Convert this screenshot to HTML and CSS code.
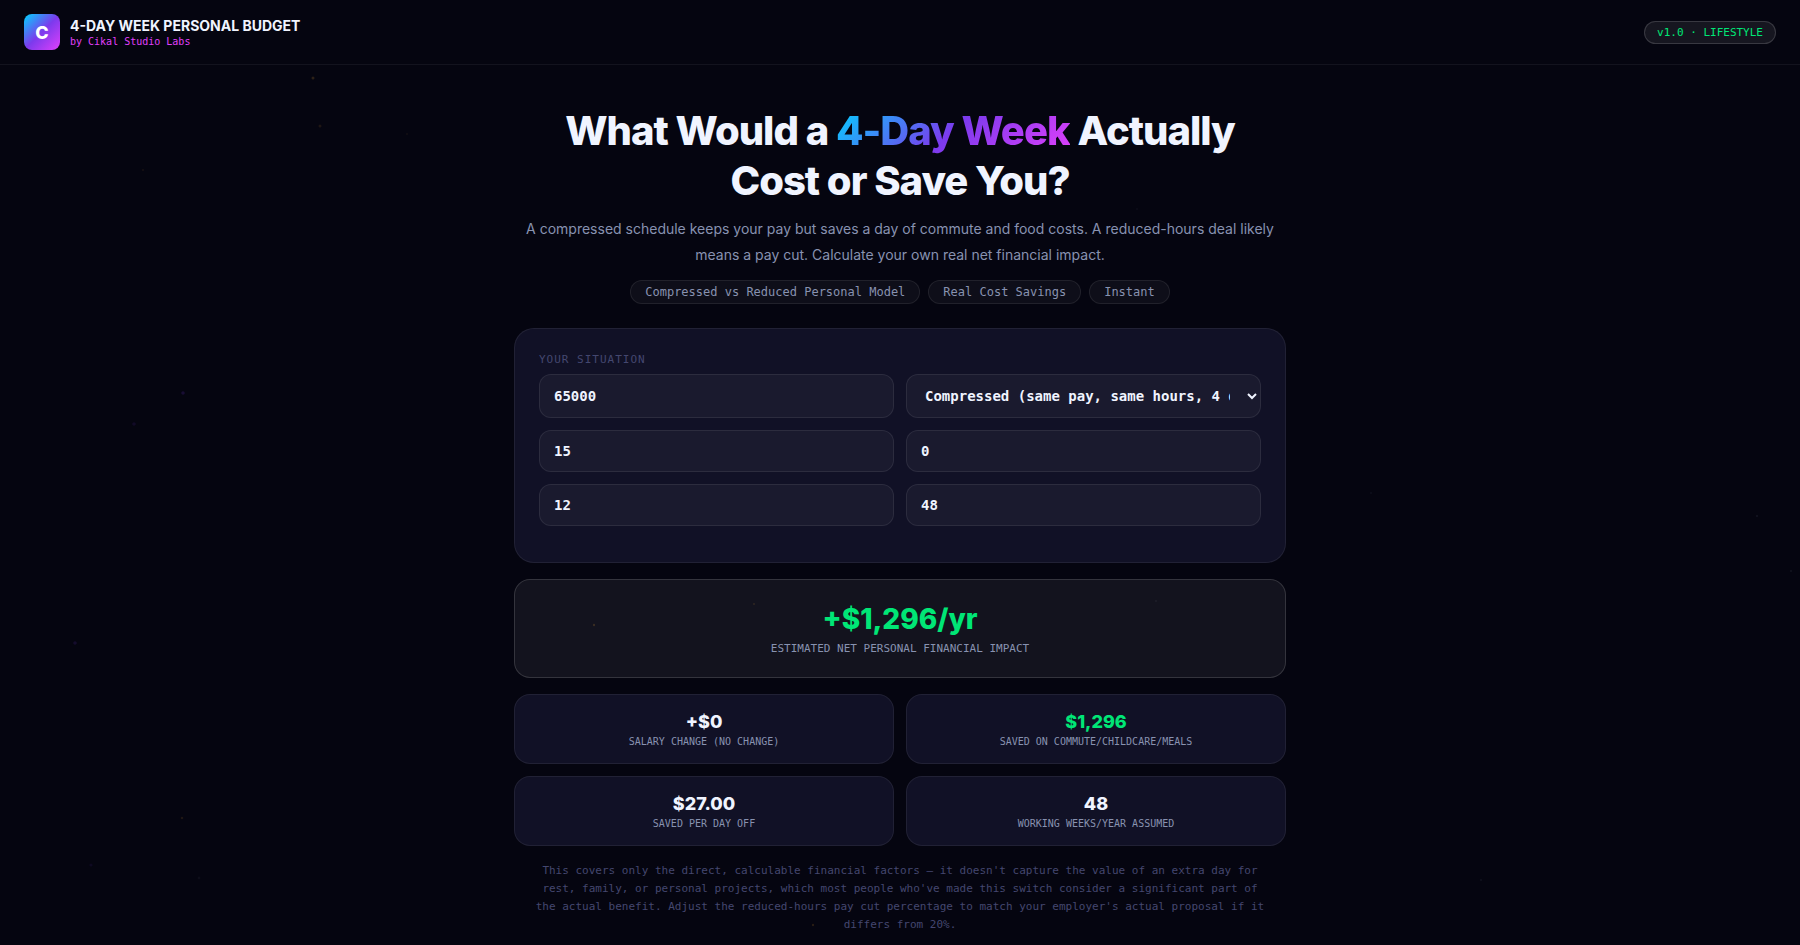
FILE: index.html
```html
<!DOCTYPE html>
<html lang="en">
  <head>
    <meta charset="UTF-8" />
    <meta name="viewport" content="width=device-width, initial-scale=1.0" />
    <title>4-Day Week Personal Budget</title>
    <link rel="stylesheet" href="styles.css">
  </head>
  <body>
    <svg class="stars" viewBox="0 0 1800 945" preserveAspectRatio="xMidYMid slice" aria-hidden="true">
      <g fill="#ffb43c">
        <circle cx="313" cy="78" r="1.5" opacity=".16" />
        <circle cx="320" cy="126" r="1.5" opacity=".1" />
        <circle cx="407" cy="134" r="1" opacity=".06" />
        <circle cx="143" cy="170" r="1" opacity=".08" />
        <circle cx="594" cy="625" r="1.2" opacity=".16" />
        <circle cx="754" cy="604" r="1" opacity=".12" />
        <circle cx="182" cy="818" r="1.3" opacity=".1" />
        <circle cx="813" cy="925" r="1.2" opacity=".14" />
      </g>
      <g fill="#7c3aed">
        <circle cx="183" cy="393" r="1.8" opacity=".16" />
        <circle cx="134" cy="424" r="1.8" opacity=".1" />
        <circle cx="75" cy="643" r="1.8" opacity=".13" />
        <circle cx="91" cy="865" r="1.6" opacity=".08" />
      </g>
      <g fill="#aab4c8">
        <circle cx="199" cy="878" r="1.4" opacity=".05" />
        <circle cx="1371" cy="493" r="1" opacity=".06" />
        <circle cx="1757" cy="516" r="1" opacity=".1" />
        <circle cx="1791" cy="571" r="1" opacity=".09" />
        <circle cx="1156" cy="601" r="1" opacity=".07" />
        <circle cx="1137" cy="209" r="1" opacity=".05" />
        <circle cx="1481" cy="880" r="1.2" opacity=".06" />
      </g>
    </svg>

    <header class="header">
      <div class="brand">
        <div class="logo">C</div>
        <div>
          <div class="brand-name">4-DAY WEEK PERSONAL BUDGET</div>
          <div class="brand-sub">by Cikal Studio Labs</div>
        </div>
      </div>
      <span class="badge">v1.0 · LIFESTYLE</span>
    </header>

    <main class="container">
      <section class="hero">
        <h1>What Would a <span class="grad">4-Day Week</span> Actually Cost or Save You?</h1>
        <p>A compressed schedule keeps your pay but saves a day of commute and food costs. A reduced-hours deal likely means a pay cut. Calculate your own real net financial impact.</p>
        <div class="pills">
          <span class="pill">Compressed vs Reduced Personal Model</span>
          <span class="pill">Real Cost Savings</span>
          <span class="pill">Instant</span>
        </div>
      </section>

      <form class="card">
        <h2 class="card-label">Your situation</h2>
        <div class="grid">
          <input type="text" inputmode="numeric" id="salary" aria-label="Annual salary" value="65000" />
          <select id="model" aria-label="Schedule type">
            <option value="compressed">Compressed (same pay, same hours, 4 days)</option>
            <option value="reduced">Reduced hours (20% pay cut)</option>
          </select>
          <input type="text" inputmode="numeric" id="commute" aria-label="Daily commute cost" value="15" />
          <input type="text" inputmode="numeric" id="childcare" aria-label="Daily childcare cost" value="0" />
          <input type="text" inputmode="numeric" id="meals" aria-label="Daily meal cost" value="12" />
          <input type="text" inputmode="numeric" id="weeks" aria-label="Working weeks per year" value="48" />
        </div>
      </form>

      <section class="result">
        <div class="result-value">+$1,296/yr</div>
        <div class="result-label">Estimated net personal financial impact</div>
      </section>

      <section class="stats">
        <div class="stat">
          <div class="stat-value">+$0</div>
          <div class="stat-label">Salary change (no change)</div>
        </div>
        <div class="stat">
          <div class="stat-value green">$1,296</div>
          <div class="stat-label">Saved on commute/childcare/meals</div>
        </div>
        <div class="stat">
          <div class="stat-value">$27.00</div>
          <div class="stat-label">Saved per day off</div>
        </div>
        <div class="stat">
          <div class="stat-value">48</div>
          <div class="stat-label">Working weeks/year assumed</div>
        </div>
      </section>

      <p class="note">This covers only the direct, calculable financial factors — it doesn't capture the value of an extra day for rest, family, or personal projects, which most people who've made this switch consider a significant part of the actual benefit. Adjust the reduced-hours pay cut percentage to match your employer's actual proposal if it differs from 20%.</p>
    </main>
  </body>
</html>
```
FILE: styles.css
```css
:root {
  --bg: #050510;
  --card: #111126;
  --text: #f0f4ff;
  --muted: #8892b0;
  --dim: #44476f;
  --green: #00e676;
  --pink: #e040fb;
  --grad: linear-gradient(135deg, #00d4ff, #7c3aed 50%, #e040fb);
  --mono: "DejaVu Sans Mono", monospace;
}
* {
  box-sizing: border-box;
  margin: 0;
  padding: 0;
}
body {
  background: var(--bg);
  color: var(--text);
  font-family: Inter, sans-serif;
  min-height: 100vh;
}
.stars {
  position: fixed;
  inset: 0;
  width: 100%;
  height: 100%;
  z-index: 1;
  pointer-events: none;
}

/* header */
.header {
  display: flex;
  justify-content: space-between;
  align-items: center;
  padding: 14px 24px;
  border-bottom: 1px solid rgba(255, 255, 255, 0.06);
}
.brand {
  display: flex;
  align-items: center;
  gap: 10px;
}
.logo {
  width: 36px;
  height: 36px;
  border-radius: 8px;
  background: var(--grad);
  color: #fff;
  display: flex;
  align-items: center;
  justify-content: center;
  font-size: 18px;
  font-weight: 800;
}
.brand-name {
  font-size: 14px;
  line-height: 17px;
  font-weight: 700;
}
.brand-sub {
  font-family: var(--mono);
  font-size: 10px;
  line-height: 12px;
  color: var(--pink);
  margin-top: 2px;
}
.badge {
  font-family: var(--mono);
  font-size: 11px;
  line-height: 13px;
  color: var(--green);
  padding: 4px 12px;
  border: 1px solid rgba(255, 255, 255, 0.15);
  border-radius: 20px;
  background: rgba(255, 255, 255, 0.07);
}

.container {
  max-width: 820px;
  margin: 0 auto;
  padding: 41px 24px 16px;
}

/* hero */
.hero {
  text-align: center;
  margin-bottom: 24px;
}
h1 {
  max-width: 720px;
  margin: 0 auto 10px;
  font-size: 40px;
  line-height: 50px;
  font-weight: 800;
  letter-spacing: -1px;
}
.grad {
  background: var(--grad);
  -webkit-background-clip: text;
  background-clip: text;
  color: transparent;
}
.hero p {
  font-size: 14px;
  line-height: 26px;
  color: var(--muted);
  margin-bottom: 12px;
}
.pills {
  display: flex;
  flex-wrap: wrap;
  justify-content: center;
  gap: 8px;
}
.pill {
  font-family: var(--mono);
  font-size: 12px;
  line-height: 14px;
  color: var(--muted);
  padding: 4px 14px;
  border: 1px solid rgba(255, 255, 255, 0.08);
  border-radius: 20px;
  background: rgba(255, 255, 255, 0.04);
}

/* form */
.card {
  background: var(--card);
  border: 1px solid rgba(255, 255, 255, 0.07);
  border-radius: 20px;
  padding: 24px 24px 36px;
  margin-bottom: 16px;
}
.card-label {
  font-family: var(--mono);
  font-size: 11px;
  line-height: 13px;
  font-weight: 400;
  letter-spacing: 1px;
  text-transform: uppercase;
  color: var(--dim);
  margin-bottom: 8px;
}
.grid {
  display: grid;
  grid-template-columns: 1fr 1fr;
  gap: 12px;
}
.grid input,
.grid select {
  width: 100%;
  min-width: 0;
  padding: 12px 14px;
  font-family: var(--mono);
  font-size: 14px;
  font-weight: 700;
  color: var(--text);
  background: rgba(255, 255, 255, 0.04);
  border: 1px solid rgba(255, 255, 255, 0.08);
  border-radius: 12px;
}

/* results */
.result {
  text-align: center;
  padding: 22px;
  margin-bottom: 16px;
  background: rgba(255, 255, 255, 0.06);
  border: 1px solid rgba(255, 255, 255, 0.14);
  border-radius: 16px;
}
.result-value {
  font-size: 28px;
  line-height: 34px;
  font-weight: 800;
  color: var(--green);
}
.result-label {
  font-family: var(--mono);
  font-size: 11px;
  line-height: 13px;
  text-transform: uppercase;
  color: var(--muted);
  margin-top: 6px;
}
.stats {
  display: grid;
  grid-template-columns: 1fr 1fr;
  gap: 12px;
  margin-bottom: 16px;
}
.stat {
  text-align: center;
  padding: 15px;
  background: var(--card);
  border: 1px solid rgba(255, 255, 255, 0.07);
  border-radius: 16px;
}
.stat-value {
  font-size: 18px;
  line-height: 24px;
  font-weight: 800;
}
.stat-label {
  font-family: var(--mono);
  font-size: 10px;
  line-height: 12px;
  text-transform: uppercase;
  color: var(--muted);
  margin-top: 2px;
}
.green {
  color: var(--green);
}
.note {
  font-family: var(--mono);
  font-size: 11px;
  line-height: 18px;
  text-align: center;
  color: var(--dim);
  padding: 0 20px;
}
```
